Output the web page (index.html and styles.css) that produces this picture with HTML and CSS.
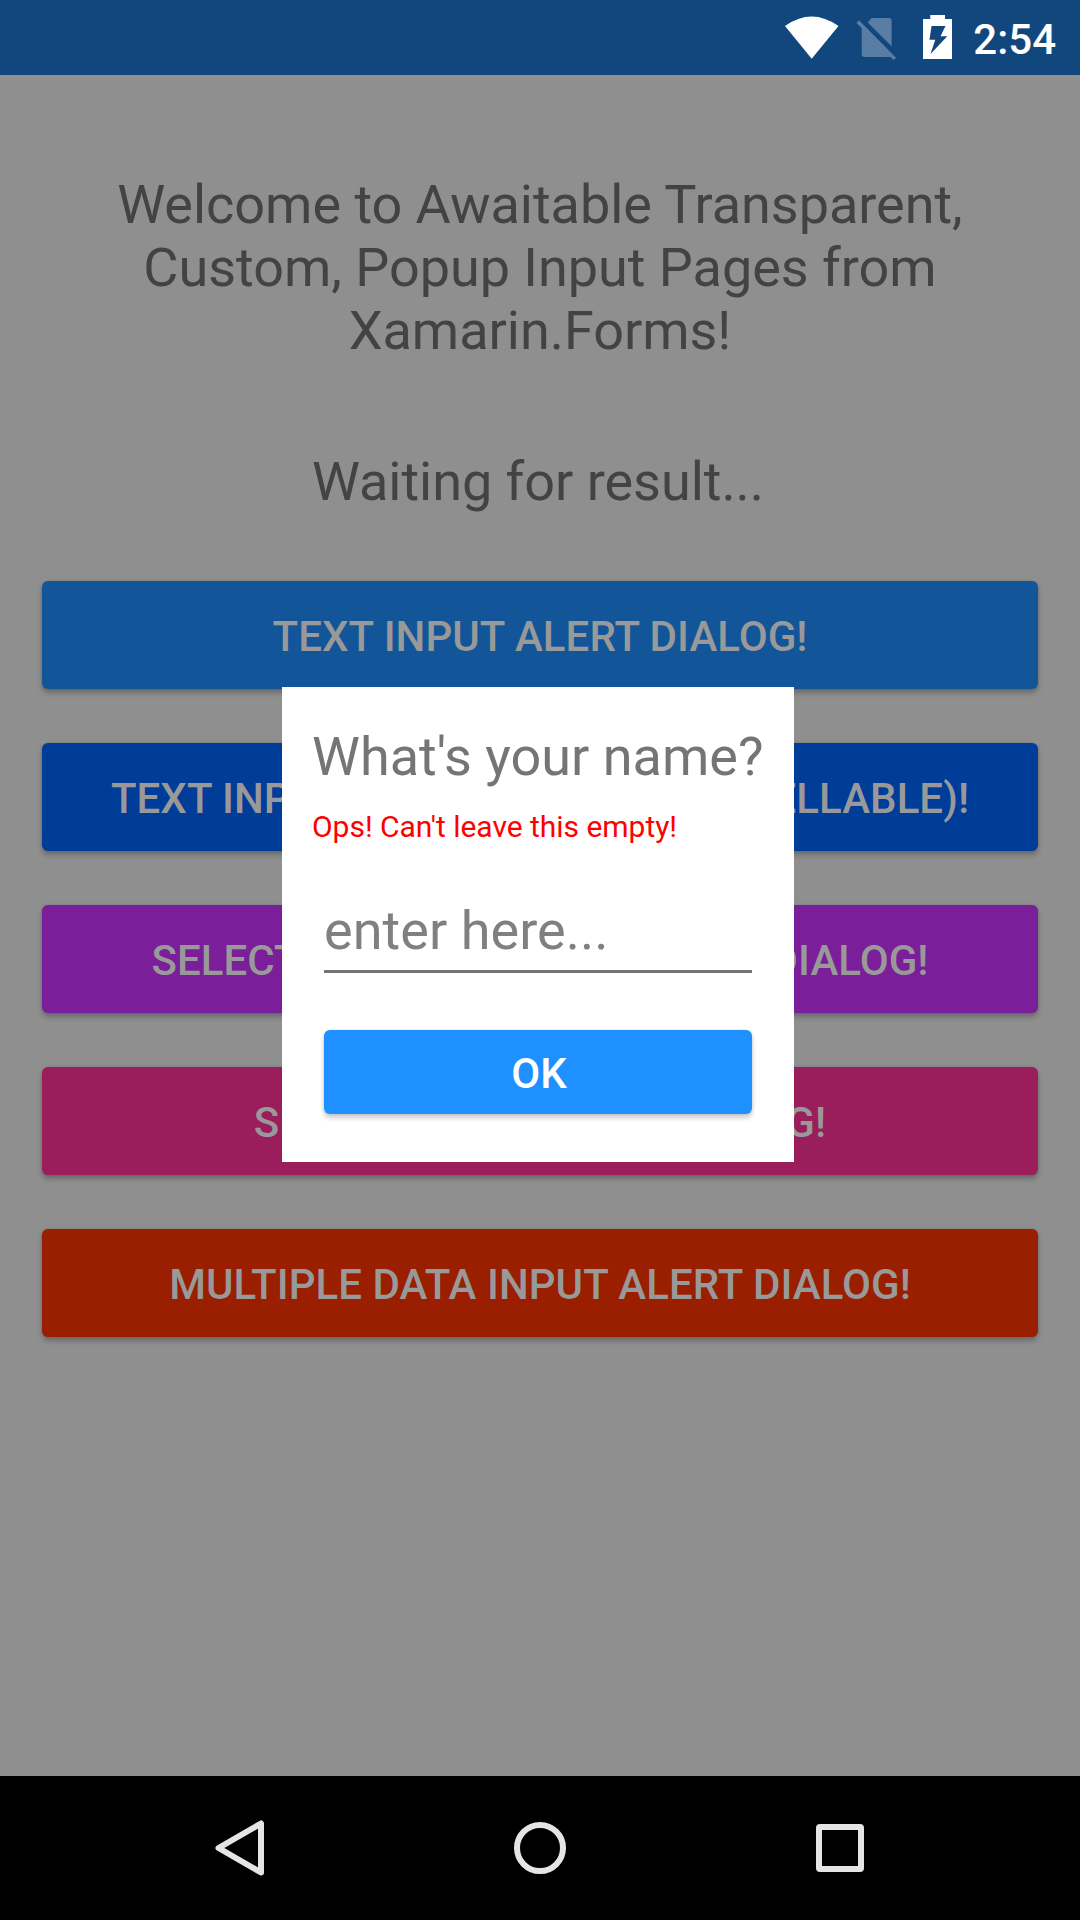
FILE: index.html
```html
<!DOCTYPE html>
<html lang="en">
<head>
<meta charset="utf-8">
<title>Awaitable Popup</title>
<link rel="stylesheet" href="styles.css">
</head>
<body>
<div class="screen">
  <header class="status">
    <svg class="icon-wifi" viewBox="0 0 54 43"><path d="M0 10Q26.5 -9 53.500 10L26.700 42.800Z" fill="#fff"/></svg>
    <svg class="icon-sim" viewBox="0 0 40 42" fill="#587ea5"><path d="M15.600 0H32.600Q35.600 0 35.600 3V28.300L11.700 4.600Z"/><path d="M3 2.300L40 39.700L37.700 42L34.500 38.900H8.700Q5.700 38.900 5.700 36V10.200L.5 5Z"/></svg>
    <svg class="icon-battery" viewBox="0 0 29 44"><path fill="#fff" fill-rule="evenodd" d="M7.300 0H22V4H29V44H0V4H7.300ZM8.500 11H22.500L17.500 21.300H24.300L7.500 39L12.300 24.700H6.500Z"/></svg>
    <span class="clock">2:54</span>
  </header>
  <main class="content">
    <p class="label">Welcome to Awaitable Transparent,<br>Custom, Popup Input Pages from<br>Xamarin.Forms!</p>
    <p class="label result">Waiting for result...</p>
    <div class="actions">
      <button class="button blue">TEXT INPUT ALERT DIALOG!</button>
      <button class="button navy">TEXT INPUT ALERT DIALOG (CANCELLABLE)!</button>
      <button class="button purple">SELECTABLE LIST INPUT ALERT DIALOG!</button>
      <button class="button pink">SLIDER INPUT ALERT DIALOG!</button>
      <button class="button red">MULTIPLE DATA INPUT ALERT DIALOG!</button>
    </div>
  </main>
  <nav class="nav">
    <svg class="nav-icon" viewBox="0 0 60 60"><path d="M51 5.500V54.500L8.500 30Z"/></svg>
    <svg class="nav-icon" viewBox="0 0 60 60"><circle cx="30" cy="30" r="23"/></svg>
    <svg class="nav-icon" viewBox="0 0 60 60"><rect x="9" y="9" width="42" height="42" rx="1"/></svg>
  </nav>
  <section class="dialog">
    <h1 class="title">What's your name?</h1>
    <p class="error">Ops! Can't leave this empty!</p>
    <div class="field">enter here...</div>
    <button class="button ok">OK</button>
  </section>
</div>
</body>
</html>
```
FILE: styles.css
```css
* { box-sizing: border-box; }
body { margin: 0; font-family: Roboto, "Liberation Sans", sans-serif; }
p, h1 { margin: 0; font-weight: 400; }
.screen {
  position: relative;
  display: flex;
  flex-direction: column;
  width: 1080px;
  height: 1920px;
  overflow: hidden;
  background: #8f8f8f;
}
.status {
  display: flex;
  align-items: flex-start;
  justify-content: flex-end;
  height: 75px;
  padding-right: 24px;
  background: #12477e;
}
.icon-wifi { width: 54px; height: 43px; margin: 16px 17px 0 0; }
.icon-sim { width: 40px; height: 42px; margin: 18px 27px 0 0; }
.icon-battery { width: 29px; height: 44px; margin: 15px 21px 0 0; }
.clock {
  margin-top: 15px;
  font-size: 42px;
  font-weight: 500;
  line-height: 50px;
  color: #fff;
}
.content { flex: 1; padding: 98px 42px 0; }
.label {
  font-size: 54px;
  line-height: 63px;
  text-align: center;
  letter-spacing: -.03px;
  color: #434343;
}
.result { margin: 88px 0 68px; padding-right: 4px; }
.actions { display: flex; flex-direction: column; gap: 54px; }
.button {
  height: 108px;
  padding: 4px 0 0;
  border: 0;
  border-radius: 6px;
  font: 500 42px/50px Roboto, "Liberation Sans", sans-serif;
  letter-spacing: .05px;
  white-space: nowrap;
  color: #999;
  box-shadow: 0 4px 5px rgba(0, 0, 0, .24), 0 0 3px rgba(0, 0, 0, .14);
}
.blue { background: #125699; }
.navy { background: #003d99; }
.purple { background: #7b1e99; }
.pink { background: #991e5b; }
.red { background: #991f00; }
.nav {
  display: flex;
  align-items: center;
  justify-content: center;
  gap: 240px;
  height: 144px;
  background: #000;
}
.nav-icon {
  width: 60px;
  height: 60px;
  fill: none;
  stroke: #e5e5e5;
  stroke-width: 6;
  stroke-linejoin: round;
}
.dialog {
  position: absolute;
  top: 687px;
  left: 282px;
  display: flex;
  flex-direction: column;
  width: 512px;
  height: 475px;
  padding: 38px 30px 48px;
  background: #fff;
}
.title { font-size: 54px; line-height: 63px; white-space: nowrap; color: #757575; }
.error { margin-top: 21px; font-size: 30px; line-height: 36px; letter-spacing: -.03px; color: #f00; }
.field {
  height: 87px;
  margin: 41px 12px 57px;
  padding-top: 13px;
  border-bottom: 3px solid #757575;
  font-size: 54px;
  line-height: 63px;
  letter-spacing: .05px;
  color: #808080;
}
.ok {
  height: 84px;
  margin: 0 12px;
  padding-left: 2px;
  background: #1e90ff;
  color: #fff;
  box-shadow: 0 4px 5px rgba(0, 0, 0, .2), 0 0 3px rgba(0, 0, 0, .12);
}
```
